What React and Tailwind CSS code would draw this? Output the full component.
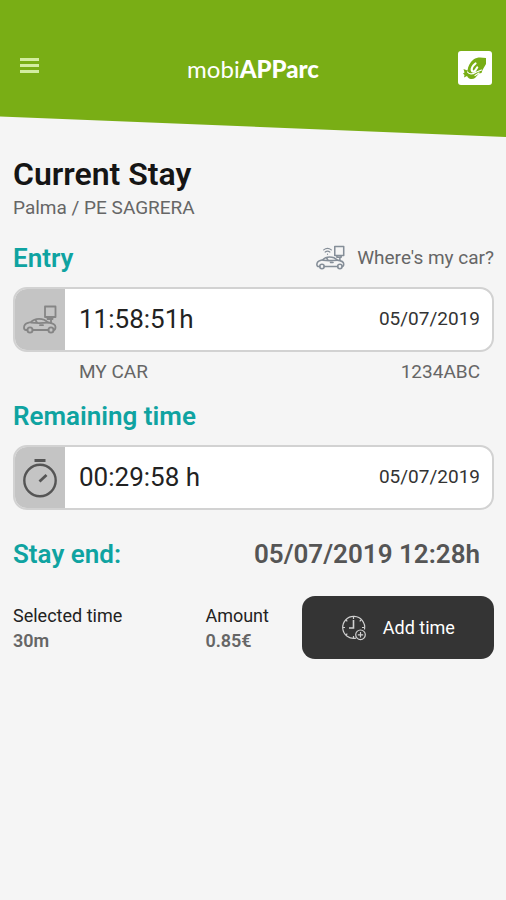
function MeterCarIcon({ className, signal }) {
  return (
    <svg viewBox="0 0 34 30" className={className} fill="none" stroke="currentColor" strokeWidth="1.8" strokeLinejoin="round" strokeLinecap="round" aria-hidden="true">
      <path d="M4.500 25H3c-1.300 0-2-1-2-2.300 0-3 1.200-4.200 4-4.900l3-.8c2-2.300 4-3.200 8-3.200 4.500 0 6.500 1 9 3.700 4.500.6 7.500 1.800 7.500 4.500 0 2-.5 3-2 3M9.500 25h16" />
      <path d="M8 17.600c5 .6 11 .6 17 0M12.500 15l1.500 2.600M17 20.200h3" />
      <circle cx="7" cy="25" r="2.600" />
      <circle cx="28" cy="25" r="2.600" />
      <path d="M22 1.500h10.500v10.500H22zM24.500 12v2h5v-2M28 14V17.500" />
      {signal && <path d="M9 5.500c3-2.500 6-2.500 9 0M10.800 8c2-1.500 3.500-1.500 5.400 0M13.500 10.300v.4" strokeWidth="1.400" />}
    </svg>
  );
}

function StopwatchIcon() {
  return (
    <svg viewBox="0 0 36 42" className="h-[42px] w-9" fill="none" stroke="#555" strokeWidth="2.400" aria-hidden="true">
      <path d="M12.500 3.500h11" strokeWidth="3" />
      <circle cx="18" cy="23.500" r="15.700" />
      <path d="M17.500 24.500l7-6.500" strokeWidth="2.800" />
    </svg>
  );
}

function ClockAddIcon() {
  return (
    <svg viewBox="0 0 26 26" className="h-[26px] w-[26px]" fill="none" stroke="#d0d0d0" strokeWidth="1.200" aria-hidden="true">
      <path d="M23.500 14.500A11 11 0 1 0 15 23.200" />
      <path d="M12.500 5v8H8" strokeWidth="1.600" />
      <path d="M12.500 2v2M2 12.500h2M21 12.500h2M12.500 21v2M5 5l1.300 1.300M20 5l-1.300 1.300M5 20l1.300-1.300" />
      <circle cx="19.500" cy="19.800" r="4.800" />
      <path d="M19.500 17.100v5.400M16.800 19.800h5.400" />
    </svg>
  );
}

function BrandIcon() {
  return (
    <svg viewBox="0 0 34 34" className="h-[34px] w-[34px]" aria-hidden="true">
      <path fill="#79ae15" d="M28 7v6l-3.500 6-1 3-2.500.5-4 4.500c-2 1.500-5 1.500-7-.5l-1-1.500-3 1.500.5-2.500-1.500-1.500 1.500-1-1-3.500 4 1.500C10 15 12 11.500 15.500 8.500 17.500 7 20 6.500 22 6.500z" />
      <path fill="none" stroke="#fff" strokeWidth="2.200" strokeLinecap="round" strokeLinejoin="round" d="M17.500 12.500c-2.500 2-4 4.500-3.800 6.500.3 2 2.300 2.200 3.500.5l2-3" />
      <path fill="none" stroke="#fff" strokeWidth="1.200" strokeLinecap="round" d="M9.500 21c1.500 2.500 5 2.500 8 .5l6-2.500M17 24.500l4-2.500" />
    </svg>
  );
}

function TimeCard({ icon, time, date }) {
  return (
    <div className="mt-[13px] flex h-[65px] overflow-hidden rounded-[14px] border-2 border-[#d2d2d2] bg-white">
      <div className="flex w-[50px] shrink-0 items-center justify-center bg-[#c4c4c4]">{icon}</div>
      <div className="flex flex-1 items-center justify-between pr-3 pl-[14px]">
        <span className="text-[26px] text-[#222]">{time}</span>
        <span className="text-[19px] text-[#333]">{date}</span>
      </div>
    </div>
  );
}

export default function App() {
  return (
    <div className="min-h-screen bg-[#f5f5f5] font-['Roboto',sans-serif]">
      <header className="flex h-[137px] items-start justify-between bg-[#79ae15] pr-[14px] pl-5 [clip-path:polygon(0_0,100%_0,100%_100%,0_85%)]">
        <button type="button" aria-label="Menu" className="mt-[58px] flex w-7 flex-col gap-[3px]">
          <span className="h-[3px] w-[19px] bg-[#d3eda0]" />
          <span className="h-[3px] w-[19px] bg-[#d3eda0]" />
          <span className="h-[3px] w-[19px] bg-[#d3eda0]" />
        </button>
        <div className="mt-[53px] font-['Lato',sans-serif] text-[24px] leading-8 text-white">
          mobi<b className="font-black">APParc</b>
        </div>
        <button type="button" aria-label="Parking home" className="mt-[51px] rounded-[3px] bg-white">
          <BrandIcon />
        </button>
      </header>

      <main className="pt-[17px] pr-3 pb-6 pl-[13px]">
        <h1 className="text-[32px] leading-10 font-semibold text-[#151515]">Current Stay</h1>
        <p className="text-[19px] leading-7 text-[#666]">Palma / PE SAGRERA</p>

        <div className="mt-5 flex h-8 items-center justify-between">
          <h2 className="text-[26px] leading-8 font-semibold text-[#0fa3a1]">Entry</h2>
          <a href="#car" className="flex items-center gap-3 text-[19px] leading-8 text-[#666]">
            <MeterCarIcon signal className="h-[26px] w-[29px] text-[#858e98]" />
            Where's my car?
          </a>
        </div>
        <TimeCard icon={<MeterCarIcon className="h-[30px] w-[34px] text-[#858585]" />} time="11:58:51h" date="05/07/2019" />
        <div className="mt-2 flex justify-between pr-[14px] pl-[66px] text-[19px] leading-6 text-[#666]">
          <span>MY CAR</span>
          <span>1234ABC</span>
        </div>

        <h2 className="mt-4 text-[26px] leading-8 font-semibold text-[#0fa3a1]">Remaining time</h2>
        <TimeCard icon={<StopwatchIcon />} time="00:29:58 h" date="05/07/2019" />

        <div className="mt-7 flex items-center justify-between pr-[14px] text-[26px] leading-8 font-semibold">
          <h2 className="text-[#0fa3a1]">Stay end:</h2>
          <span className="text-[#555]">05/07/2019 12:28h</span>
        </div>

        <div className="mt-[26px] grid grid-cols-[2fr_1fr_2fr] items-center text-[18px] leading-[25px]">
          <div>
            <div className="text-[#222]">Selected time</div>
            <div className="font-semibold text-[#666]">30m</div>
          </div>
          <div>
            <div className="text-[#222]">Amount</div>
            <div className="font-semibold text-[#666]">0.85€</div>
          </div>
          <button type="button" className="flex h-[63px] items-center justify-center gap-4 rounded-[13px] bg-[#343434] text-[18px] text-white">
            <ClockAddIcon />
            Add time
          </button>
        </div>
      </main>
    </div>
  );
}
